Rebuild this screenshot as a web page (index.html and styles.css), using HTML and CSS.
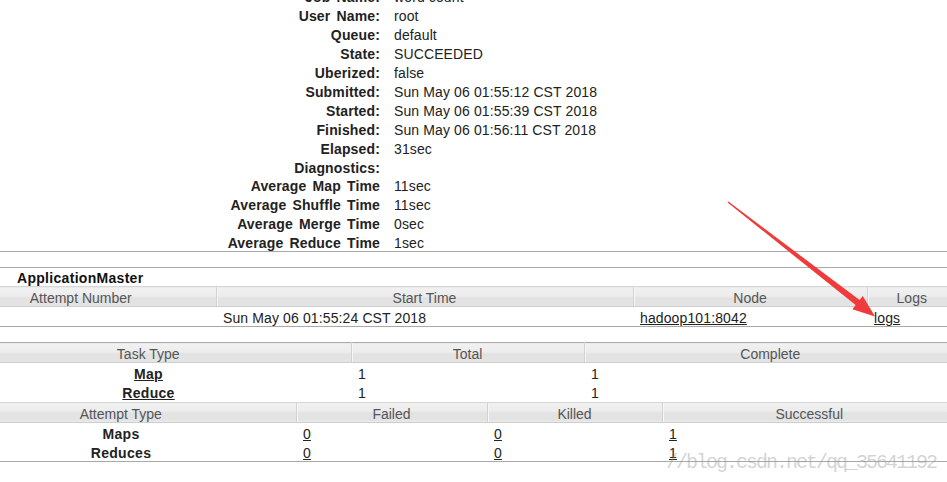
FILE: index.html
```html
<!DOCTYPE html>
<html>
<head>
<meta charset="utf-8">
<link rel="stylesheet" href="styles.css">
</head>
<body>
<div class="page">
  <div class="info">
    <div class="info-row"><span class="lbl">Job Name:</span><span class="val">word count</span></div>
    <div class="info-row"><span class="lbl">User Name:</span><span class="val">root</span></div>
    <div class="info-row"><span class="lbl">Queue:</span><span class="val">default</span></div>
    <div class="info-row"><span class="lbl">State:</span><span class="val">SUCCEEDED</span></div>
    <div class="info-row"><span class="lbl">Uberized:</span><span class="val">false</span></div>
    <div class="info-row"><span class="lbl">Submitted:</span><span class="val">Sun May 06 01:55:12 CST 2018</span></div>
    <div class="info-row"><span class="lbl">Started:</span><span class="val">Sun May 06 01:55:39 CST 2018</span></div>
    <div class="info-row"><span class="lbl">Finished:</span><span class="val">Sun May 06 01:56:11 CST 2018</span></div>
    <div class="info-row"><span class="lbl">Elapsed:</span><span class="val">31sec</span></div>
    <div class="info-row"><span class="lbl">Diagnostics:</span><span class="val"></span></div>
    <div class="info-row"><span class="lbl">Average Map Time</span><span class="val">11sec</span></div>
    <div class="info-row"><span class="lbl">Average Shuffle Time</span><span class="val">11sec</span></div>
    <div class="info-row"><span class="lbl">Average Merge Time</span><span class="val">0sec</span></div>
    <div class="info-row"><span class="lbl">Average Reduce Time</span><span class="val">1sec</span></div>
  </div>

  <table class="tbl am">
    <colgroup><col class="w270"><col class="w417"><col class="w234"><col></colgroup>
    <tr class="cap"><td colspan="4"><span class="caption">ApplicationMaster</span></td></tr>
    <tr class="head"><th>Attempt Number</th><th>Start Time</th><th>Node</th><th>Logs</th></tr>
    <tr class="data"><td></td><td>Sun May 06 01:55:24 CST 2018</td><td><a href="#">hadoop101:8042</a></td><td><a href="#">logs</a></td></tr>
  </table>

  <table class="tbl task">
    <colgroup><col class="w405"><col class="w233"><col></colgroup>
    <tr class="head first"><th>Task Type</th><th>Total</th><th>Complete</th></tr>
    <tr class="data"><td class="type"><a href="#">Map</a></td><td>1</td><td>1</td></tr>
    <tr class="data"><td class="type"><a href="#">Reduce</a></td><td>1</td><td>1</td></tr>
  </table>

  <table class="tbl attempt">
    <colgroup><col class="w350"><col class="w191"><col class="w175"><col></colgroup>
    <tr class="head"><th>Attempt Type</th><th>Failed</th><th>Killed</th><th>Successful</th></tr>
    <tr class="data"><td class="type">Maps</td><td><a href="#">0</a></td><td><a href="#">0</a></td><td><a href="#">1</a></td></tr>
    <tr class="data"><td class="type">Reduces</td><td><a href="#">0</a></td><td><a href="#">0</a></td><td><a href="#">1</a></td></tr>
  </table>
</div>

<svg class="arrow" width="947" height="482" viewBox="0 0 947 482">
  <polygon points="727.6,202.5 855.6,305.1 852.4,309.2 875,316.5 862.8,295.9 859.6,300.0 728.4,201.5" fill="#ef3b3b"/>
</svg>

<div class="watermark">//blog.csdn.net/qq_35641192</div>
</body>
</html>
```

FILE: styles.css
```css
html, body {
  margin: 0;
  padding: 0;
}
body {
  font-family: "Liberation Sans", Arial, sans-serif;
  font-size: 14px;
  color: #222;
  background: #fff;
  overflow: hidden;
  width: 947px;
  height: 482px;
  position: relative;
}
.page {
  margin-left: -54px;
  width: 1010px;
}

/* info block */
.info {
  margin-top: -13.6px;
  border-bottom: 1px solid #a9a9a9;
}
.info-row {
  display: grid;
  grid-template-columns: 441px 1fr;
  height: 18.92px;
  box-sizing: border-box;
  padding-top: 4px;
  line-height: 15px;
  white-space: nowrap;
}
.lbl {
  font-weight: bold;
  text-align: right;
  padding-right: 7px;
  color: #222;
  letter-spacing: 0.15px;
  word-spacing: 2px;
}
.val {
  padding-left: 7px;
  color: #222;
  letter-spacing: 0.12px;
}

/* tables */
.tbl {
  width: 1010px;
  table-layout: fixed;
  border-collapse: collapse;
  border-spacing: 0;
}
.w270 { width: 270px; }
.w417 { width: 417px; }
.w234 { width: 234px; }
.w405 { width: 405px; }
.w233 { width: 233px; }
.w350 { width: 350px; }
.w191 { width: 191px; }
.w175 { width: 175px; }

.tbl td, .tbl th {
  padding: 0;
  white-space: nowrap;
  overflow: hidden;
}
.am {
  margin-top: 15px;
  border-top: 1px solid #a9a9a9;
  border-bottom: 1px solid #a9a9a9;
}
.cap td {
  height: 19px;
  box-sizing: border-box;
  padding: 3px 0 0 71px;
  line-height: 15px;
  vertical-align: top;
}
.caption {
  font-weight: bold;
  color: #111;
  letter-spacing: 0.3px;
}
.head th {
  font-weight: normal;
  color: #555;
  text-align: center;
  height: 20px;
  box-sizing: border-box;
  padding: 4px 0 0;
  line-height: 15px;
  vertical-align: top;
  border-top: 1px solid #d6d6d6;
  border-bottom: 1px solid #cdcdcd;
  background: linear-gradient(to bottom, #f1f1f1 0%, #ececec 48%, #e2e2e2 52%, #e4e4e4 100%);
}
.head th + th {
  border-left: 1px solid #d2d2d2;
  box-shadow: inset 1px 0 0 #f6f6f6;
}
.head.first th {
  border-top: none;
  height: 19px;
}
.data td {
  height: 19.5px;
  box-sizing: border-box;
  padding: 4px 7px 0;
  line-height: 15px;
  vertical-align: top;
  text-align: left;
  letter-spacing: 0.12px;
}
.data td.type {
  text-align: center;
  font-weight: bold;
  padding-left: 0;
  padding-right: 0;
  letter-spacing: 0.3px;
}
a {
  color: #222;
  text-decoration: underline;
}
.task {
  margin-top: 15px;
  border-top: 1px solid #a9a9a9;
}
.attempt {
  border-bottom: 1px solid #a9a9a9;
}

/* overlays */
.arrow {
  position: absolute;
  left: 0;
  top: 0;
  pointer-events: none;
}
.watermark {
  position: absolute;
  left: 666px;
  top: 452.7px;
  font-family: "Liberation Mono", "Courier New", monospace;
  font-size: 20px;
  line-height: 20px;
  letter-spacing: -2px;
  color: rgba(150, 150, 150, 0.42);
  white-space: nowrap;
}
```
